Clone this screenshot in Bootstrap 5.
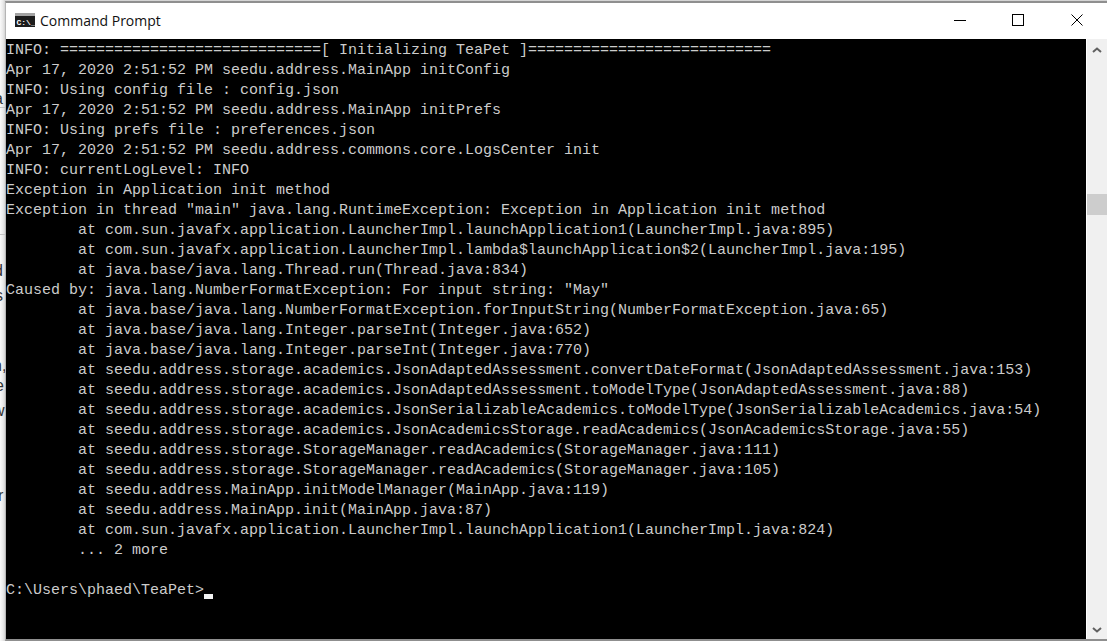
<!DOCTYPE html>
<html lang="en">
<head>
<meta charset="utf-8">
<title>Command Prompt</title>
<link href="https://cdn.jsdelivr.net/npm/bootstrap@5.3.0/dist/css/bootstrap.min.css" rel="stylesheet">
<style>
html,body{height:100%;overflow:hidden;background:#fff}
.desk{height:641px;padding:1px 0 0 5px;position:relative;background:linear-gradient(90deg,#fafafa 0,#e9e9e9 3px,#d4d4d4 5px)}
.cmdwin{height:100%;border-top:2px solid #8f8f8f;border-bottom:2px solid #8f8f8f;border-left:1px solid #b5b5b5;background:#fff;position:relative}
.titlebar{height:36px;padding-bottom:2px;font-family:"Segoe UI","Open Sans","Noto Sans",sans-serif;font-size:14px;color:#111}
.appicon{margin-left:9px}
.apptitle{margin-left:5px}
.wbtn{width:58px}
.wbtn-shift{margin-right:1px}
.console{background:#000;min-height:0}
.conout{margin:0;padding:2px 0 0 0;font-family:"Liberation Mono",monospace;font-size:15px;line-height:20px;color:#ccc;white-space:pre;overflow:hidden;background:transparent}
.cursor{display:inline-block;width:9px;height:5px;background:#f2f2f2;vertical-align:-5px}
.sbar{width:21px;background:#f0f0f0;border-left:1px solid #fff}
.sthumb{height:21px;margin-top:135px;background:#cdcdcd}
.scrollarrow{height:20px;line-height:18px}
.behind{position:absolute;left:0;top:0;width:5px;height:641px;overflow:hidden;font-family:"Liberation Sans",sans-serif;font-size:16px;color:#333}
.frag{position:absolute;line-height:16px}
.rule{position:absolute;left:0;width:5px;height:1px;background:#c4c4c4}
</style>
</head>
<body>
<div class="desk">
<div class="behind" aria-hidden="true">
  <span class="frag" style="left:-6px;top:91px">a</span>
  <span class="frag" style="left:-6px;top:263px">d</span>
  <span class="frag" style="left:-5px;top:288px">s</span>
  <span class="frag" style="left:-7px;top:358px">n,</span>
  <span class="frag" style="left:-5px;top:378px">e</span>
  <span class="frag" style="left:-7px;top:403px">w</span>
  <span class="frag" style="left:-2px;top:488px">r</span>
  <span class="rule" style="top:107px"></span>
  <span class="rule" style="top:234px"></span>
</div>
<div class="cmdwin d-flex flex-column">
  <div class="titlebar d-flex align-items-center flex-shrink-0">
    <svg class="appicon" width="20" height="14" viewBox="0 0 20 14"><rect width="20" height="14" fill="#1c1c1c"/><rect y="0" width="20" height="3" fill="#a3a3a3"/><text x="1.5" y="11.5" font-family="Liberation Mono" font-size="8" font-weight="bold" fill="#fff">C:\_</text></svg>
    <span class="apptitle flex-grow-1">Command Prompt</span>
    <div class="wbtn d-flex justify-content-center"><svg width="12" height="12"><path d="M0 6.5H12" stroke="#000"/></svg></div>
    <div class="wbtn wbtn-shift d-flex justify-content-center"><svg width="12" height="12"><rect x=".5" y=".5" width="11" height="11" fill="none" stroke="#000"/></svg></div>
    <div class="wbtn wbtn-shift d-flex justify-content-center"><svg width="12" height="12"><path d="M.5 .5L11.5 11.5M11.5 .5L.5 11.5" stroke="#000"/></svg></div>
  </div>
  <div class="console d-flex flex-grow-1 overflow-hidden">
<pre class="conout flex-grow-1">INFO: =============================[ Initializing TeaPet ]===========================
Apr 17, 2020 2:51:52 PM seedu.address.MainApp initConfig
INFO: Using config file : config.json
Apr 17, 2020 2:51:52 PM seedu.address.MainApp initPrefs
INFO: Using prefs file : preferences.json
Apr 17, 2020 2:51:52 PM seedu.address.commons.core.LogsCenter init
INFO: currentLogLevel: INFO
Exception in Application init method
Exception in thread "main" java.lang.RuntimeException: Exception in Application init method
        at com.sun.javafx.application.LauncherImpl.launchApplication1(LauncherImpl.java:895)
        at com.sun.javafx.application.LauncherImpl.lambda$launchApplication$2(LauncherImpl.java:195)
        at java.base/java.lang.Thread.run(Thread.java:834)
Caused by: java.lang.NumberFormatException: For input string: "May"
        at java.base/java.lang.NumberFormatException.forInputString(NumberFormatException.java:65)
        at java.base/java.lang.Integer.parseInt(Integer.java:652)
        at java.base/java.lang.Integer.parseInt(Integer.java:770)
        at seedu.address.storage.academics.JsonAdaptedAssessment.convertDateFormat(JsonAdaptedAssessment.java:153)
        at seedu.address.storage.academics.JsonAdaptedAssessment.toModelType(JsonAdaptedAssessment.java:88)
        at seedu.address.storage.academics.JsonSerializableAcademics.toModelType(JsonSerializableAcademics.java:54)
        at seedu.address.storage.academics.JsonAcademicsStorage.readAcademics(JsonAcademicsStorage.java:55)
        at seedu.address.storage.StorageManager.readAcademics(StorageManager.java:111)
        at seedu.address.storage.StorageManager.readAcademics(StorageManager.java:105)
        at seedu.address.MainApp.initModelManager(MainApp.java:119)
        at seedu.address.MainApp.init(MainApp.java:87)
        at com.sun.javafx.application.LauncherImpl.launchApplication1(LauncherImpl.java:824)
        ... 2 more

C:\Users\phaed\TeaPet&gt;<span class="cursor"></span></pre>
    <div class="sbar d-flex flex-column flex-shrink-0 justify-content-between">
      <div><div class="text-center scrollarrow"><svg width="10" height="6" viewBox="0 0 10 6"><path d="M1 5L5 1.5L9 5" fill="none" stroke="#606060" stroke-width="2"/></svg></div><div class="sthumb"></div></div>
      <div class="text-center scrollarrow"><svg width="10" height="6" viewBox="0 0 10 6"><path d="M1 1L5 4.5L9 1" fill="none" stroke="#606060" stroke-width="2"/></svg></div>
    </div>
  </div>
</div>
</div>
<script src="https://cdn.jsdelivr.net/npm/bootstrap@5.3.0/dist/js/bootstrap.bundle.min.js"></script>
</body>
</html>
